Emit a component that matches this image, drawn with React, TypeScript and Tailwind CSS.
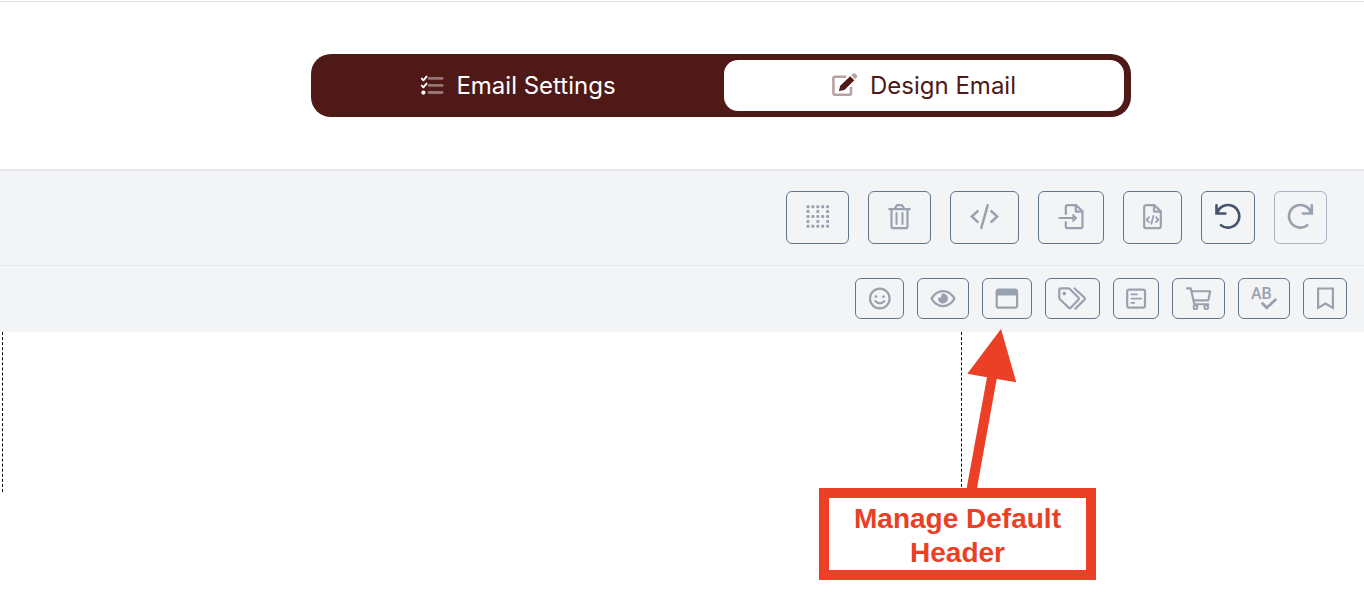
import React, { ReactNode, useState } from "react";

interface Tool {
    label: string;
    width: number;
    icon: ReactNode;
    disabled?: boolean;
    className?: string;
}

const gridDots = [0, 1, 2, 3, 4].flatMap((row) =>
    (row % 2 === 0 ? [0, 1, 2, 3, 4] : [0, 2, 4]).map((col) => ({ row, col }))
);

const mainTools: Tool[] = [
    {
        label: "Show borders",
        width: 23,
        icon: (
            <g fill="currentColor" stroke="none">
                {gridDots.map(({ row, col }) => (
                    <rect key={`${row}-${col}`} x={col * 4.9 + 0.5} y={row * 4.9 + 1.2} width="3" height="3" rx="1" />
                ))}
            </g>
        ),
    },
    {
        label: "Clear canvas",
        width: 23,
        icon: (
            <>
                <path d="M1.3 5.2H21.7M3.5 5.2V22.2a2 2 0 0 0 2 2H17.5a2 2 0 0 0 2-2V5.2" />
                <path d="M6.8 4.8L8.4 2q.5-.9 1.5-.9h3.2q1 0 1.5.9l1.6 2.8" />
                <path d="M8.5 9V20M14.5 9V20" strokeWidth="2" />
            </>
        ),
    },
    {
        label: "View code",
        width: 29,
        icon: (
            <>
                <path d="M7.6 7.2L1.8 12.4L7.6 17.8M21.4 7.2L27.2 12.4L21.4 17.8" strokeWidth="2.5" strokeLinejoin="miter" />
                <path d="M17.7 1.2L11.3 24" strokeWidth="2.5" />
            </>
        ),
    },
    {
        label: "Import template",
        width: 26,
        icon: (
            <>
                <path d="M7.8 10V3.2a2 2 0 0 1 2-2h8.4l6.3 6.2V22.2a2 2 0 0 1-2 2H9.8a2 2 0 0 1-2-2V18" />
                <path d="M17.8 1.5V7.6H24.4" />
                <path d="M1.3 14H16" strokeWidth="2" />
                <path d="M15.2 10.4L18.8 14L15.2 17.6Z" fill="currentColor" strokeWidth="1" />
            </>
        ),
    },
    {
        label: "Export HTML",
        width: 19,
        icon: (
            <>
                <path d="M3.2 1.2h8.2l6.4 6.2V22.2a2 2 0 0 1-2 2H3.2a2 2 0 0 1-2-2V3.2a2 2 0 0 1 2-2z" />
                <path d="M11 1.5V7.6H17.6" />
                <path d="M6 13.2L3.7 15.7L6 18.2M13 13.2L15.3 15.7L13 18.2M10.4 11.8L8.4 19.8" strokeWidth="1.8" />
            </>
        ),
    },
    {
        label: "Undo",
        width: 26,
        className: "border-slate-500 px-[13px] text-slate-600",
        icon: (
            <path d="M1.5 1.2V9.5H10.4M2.2 9A11.3 11.3 0 1 1 6 21.2" strokeWidth="2.6" strokeLinejoin="miter" />
        ),
    },
    {
        label: "Redo",
        width: 25,
        disabled: true,
        className: "border-slate-500/50 px-[13px] text-gray-400",
        icon: (
            <path d="M23.8 1.2V9.5H14.9M23.1 9A11.3 11.3 0 1 0 19.3 21.2" strokeWidth="2.6" strokeLinejoin="miter" />
        ),
    },
];

const insertTools: Tool[] = [
    {
        label: "Emoji",
        width: 23,
        icon: (
            <>
                <circle cx="11.8" cy="11.5" r="9.8" />
                <circle cx="8" cy="9.6" r="1.4" fill="currentColor" stroke="none" />
                <circle cx="15.4" cy="9.6" r="1.4" fill="currentColor" stroke="none" />
                <path d="M7.3 14.2Q11.8 18.4 16.3 14.2" />
            </>
        ),
    },
    {
        label: "Preview",
        width: 26,
        icon: (
            <>
                <path d="M1.5 11.6Q6 4.1 13 4.1T24.5 11.6Q20 19.1 13 19.1T1.5 11.6Z" strokeWidth="2.1" />
                <path d="M13 6.5a5 5 0 1 1-4.9 4q1.6.6 2.8-.4t.5-2.9q.7-.6 1.6-.7z" fill="currentColor" stroke="none" />
            </>
        ),
    },
    {
        label: "Manage default header",
        width: 24,
        icon: (
            <>
                <rect x="1.7" y="2.7" width="20.4" height="18" rx="2" />
                <path d="M1.7 4.2a1.5 1.5 0 0 1 1.5-1.5H20.6a1.5 1.5 0 0 1 1.5 1.5V7.6H1.7z" fill="currentColor" strokeWidth="1.6" />
            </>
        ),
    },
    {
        label: "Merge tags",
        width: 29,
        icon: (
            <>
                <path d="M2.7 1.4H10.4q.8 0 1.4.6L20.4 10.5q1 1.1 0 2.2L13 20.6q-1.2 1.1-2.3 0L1.9 12.2q-.6-.6-.6-1.4V2.8q0-1.4 1.4-1.4z" />
                <circle cx="6.3" cy="6.6" r="1.8" fill="currentColor" stroke="none" />
                <path d="M16.6 1.5L26.6 10.8q.8.8 0 1.7L17.4 21.6" />
            </>
        ),
    },
    {
        label: "Form",
        width: 20,
        icon: (
            <>
                <rect x="1.2" y="2.6" width="17.8" height="18" rx="1.8" />
                <path d="M5.4 7.4H11M5.4 11.6H15.2M5.4 15.9H8.2" strokeWidth="1.8" />
            </>
        ),
    },
    {
        label: "Products",
        width: 27,
        icon: (
            <>
                <path d="M2 1.4H5.8L9.3 17.3H23.4M6.4 4.3H25.2L23.3 13.4H8.6" strokeWidth="2.1" />
                <circle cx="10.5" cy="20.2" r="1.9" strokeWidth="1.9" />
                <circle cx="21.3" cy="20.2" r="1.9" strokeWidth="1.9" />
            </>
        ),
    },
    {
        label: "Spell check",
        width: 26,
        icon: (
            <>
                <text x="0" y="11.6" fill="currentColor" stroke="none" className="font-[Roboto,sans-serif] text-[16px] font-medium">
                    AB
                </text>
                <path d="M11.5 16.4L15.8 20.8L24.4 12.8" strokeWidth="2.8" strokeLinejoin="miter" />
            </>
        ),
    },
    {
        label: "Saved blocks",
        width: 18,
        icon: <path d="M2.1 1.5H16.9V20.9L9.5 16.6L2.1 20.9Z" strokeLinejoin="miter" />,
    },
];

function ToolIcon({ width, height, children }: { width: number; height: number; children: ReactNode }) {
    return (
        <svg
            width={width}
            height={height}
            viewBox={`0 0 ${width} ${height}`}
            fill="none"
            stroke="currentColor"
            strokeWidth="2.2"
            strokeLinecap="round"
            strokeLinejoin="round"
            className="overflow-visible"
            aria-hidden="true"
        >
            {children}
        </svg>
    );
}

function ChecklistIcon() {
    return (
        <svg width="24" height="24" viewBox="0 0 24 24" fill="none" aria-hidden="true">
            <path d="M9 4.4H22.2M9 11.4H22.2M9 18.5H22.2" stroke="currentColor" strokeWidth="2.8" strokeLinecap="round" opacity="0.4" />
            <path d="M1.8 4.6L3.4 6.3L6.5 2.6M1.8 11.6L3.4 13.3L6.5 9.6" stroke="currentColor" strokeWidth="1.9" strokeLinecap="round" strokeLinejoin="round" />
            <circle cx="3.4" cy="18.6" r="2.1" fill="currentColor" />
        </svg>
    );
}

function EditIcon() {
    return (
        <svg width="26" height="26" viewBox="0 0 26 26" fill="none" aria-hidden="true">
            <path d="M14.2 3.7H3.2a1.8 1.8 0 0 0-1.8 1.8V20a1.8 1.8 0 0 0 1.8 1.8H17.2a1.8 1.8 0 0 0 1.8-1.8V14" stroke="currentColor" strokeWidth="2.6" opacity="0.4" />
            <path d="M19.2 2.2L20.5 1.1a2.4 2.4 0 0 1 3.3 0l.6.6a2.4 2.4 0 0 1 0 3.3L23.2 6.3z" fill="currentColor" opacity="0.4" />
            <path d="M18.2 3.3L22.3 7.3L13.2 16.2q-.5.5-1.2.7L7.6 18.1q-.7.1-.6-.6L8 13.4q.2-.7.7-1.2z" fill="currentColor" />
        </svg>
    );
}

function App() {
    const [tab, setTab] = useState("design");

    const tabs = [
        { id: "settings", label: "Email Settings", icon: <ChecklistIcon /> },
        { id: "design", label: "Design Email", icon: <EditIcon /> },
    ];

    return (
        <div className="min-h-screen bg-white pt-px">
            <header className="flex justify-center border-t border-neutral-200 py-13 pl-[78px]">
                <nav className="grid w-full max-w-[820px] grid-cols-2 gap-1.5 rounded-[20px] bg-[#4e1916] px-[7px] py-1.5">
                    {tabs.map((t) => (
                        <button
                            key={t.id}
                            type="button"
                            onClick={() => setTab(t.id)}
                            className={`flex h-[51px] items-center justify-center gap-3 rounded-[14px] font-[Inter,sans-serif] text-[24px] ${
                                tab === t.id ? "bg-white text-[#4e1916]" : "text-white"
                            }`}
                        >
                            {t.icon}
                            {t.label}
                        </button>
                    ))}
                </nav>
            </header>

            <section className="border-t-2 border-gray-200 bg-[#f3f4f6]">
                <div className="flex justify-end gap-[19px] border-b border-gray-200 pt-5 pr-[37px] pb-[21px]">
                    {mainTools.map((tool) => (
                        <button
                            key={tool.label}
                            type="button"
                            aria-label={tool.label}
                            disabled={tool.disabled}
                            className={`rounded-md border py-3 ${tool.className || "border-slate-500 px-[19px] text-gray-400"}`}
                        >
                            <ToolIcon width={tool.width} height={27}>{tool.icon}</ToolIcon>
                        </button>
                    ))}
                </div>
                <div className="flex justify-end gap-[13px] pt-3 pr-[17px] pb-[13px]">
                    {insertTools.map((tool) => (
                        <button
                            key={tool.label}
                            type="button"
                            aria-label={tool.label}
                            className="rounded-md border border-slate-500 px-3 py-2 text-gray-400"
                        >
                            <ToolIcon width={tool.width} height={23}>{tool.icon}</ToolIcon>
                        </button>
                    ))}
                </div>
            </section>

            <main className="relative pl-0.5">
                <div className="h-40 max-w-[960px] border-x border-dashed border-black"></div>

                {/* callout pointing at the header button */}
                <div className="absolute -top-1 right-[268px] flex w-[277px] flex-col text-[#eb4026]">
                    <svg width="277" height="160" viewBox="0 0 277 160" fill="currentColor" aria-hidden="true">
                        <path d="M182 1L197.3 54.3L177.7 51L158 160H147.7L168 49.3L148.3 45.7Z" />
                    </svg>
                    <p className="border-10 border-current bg-white px-3 pt-1 text-center font-['Liberation_Sans',Arial,sans-serif] text-[28px] leading-[34px] font-bold">
                        Manage Default Header
                    </p>
                </div>
            </main>
        </div>
    );
}

export default App;
